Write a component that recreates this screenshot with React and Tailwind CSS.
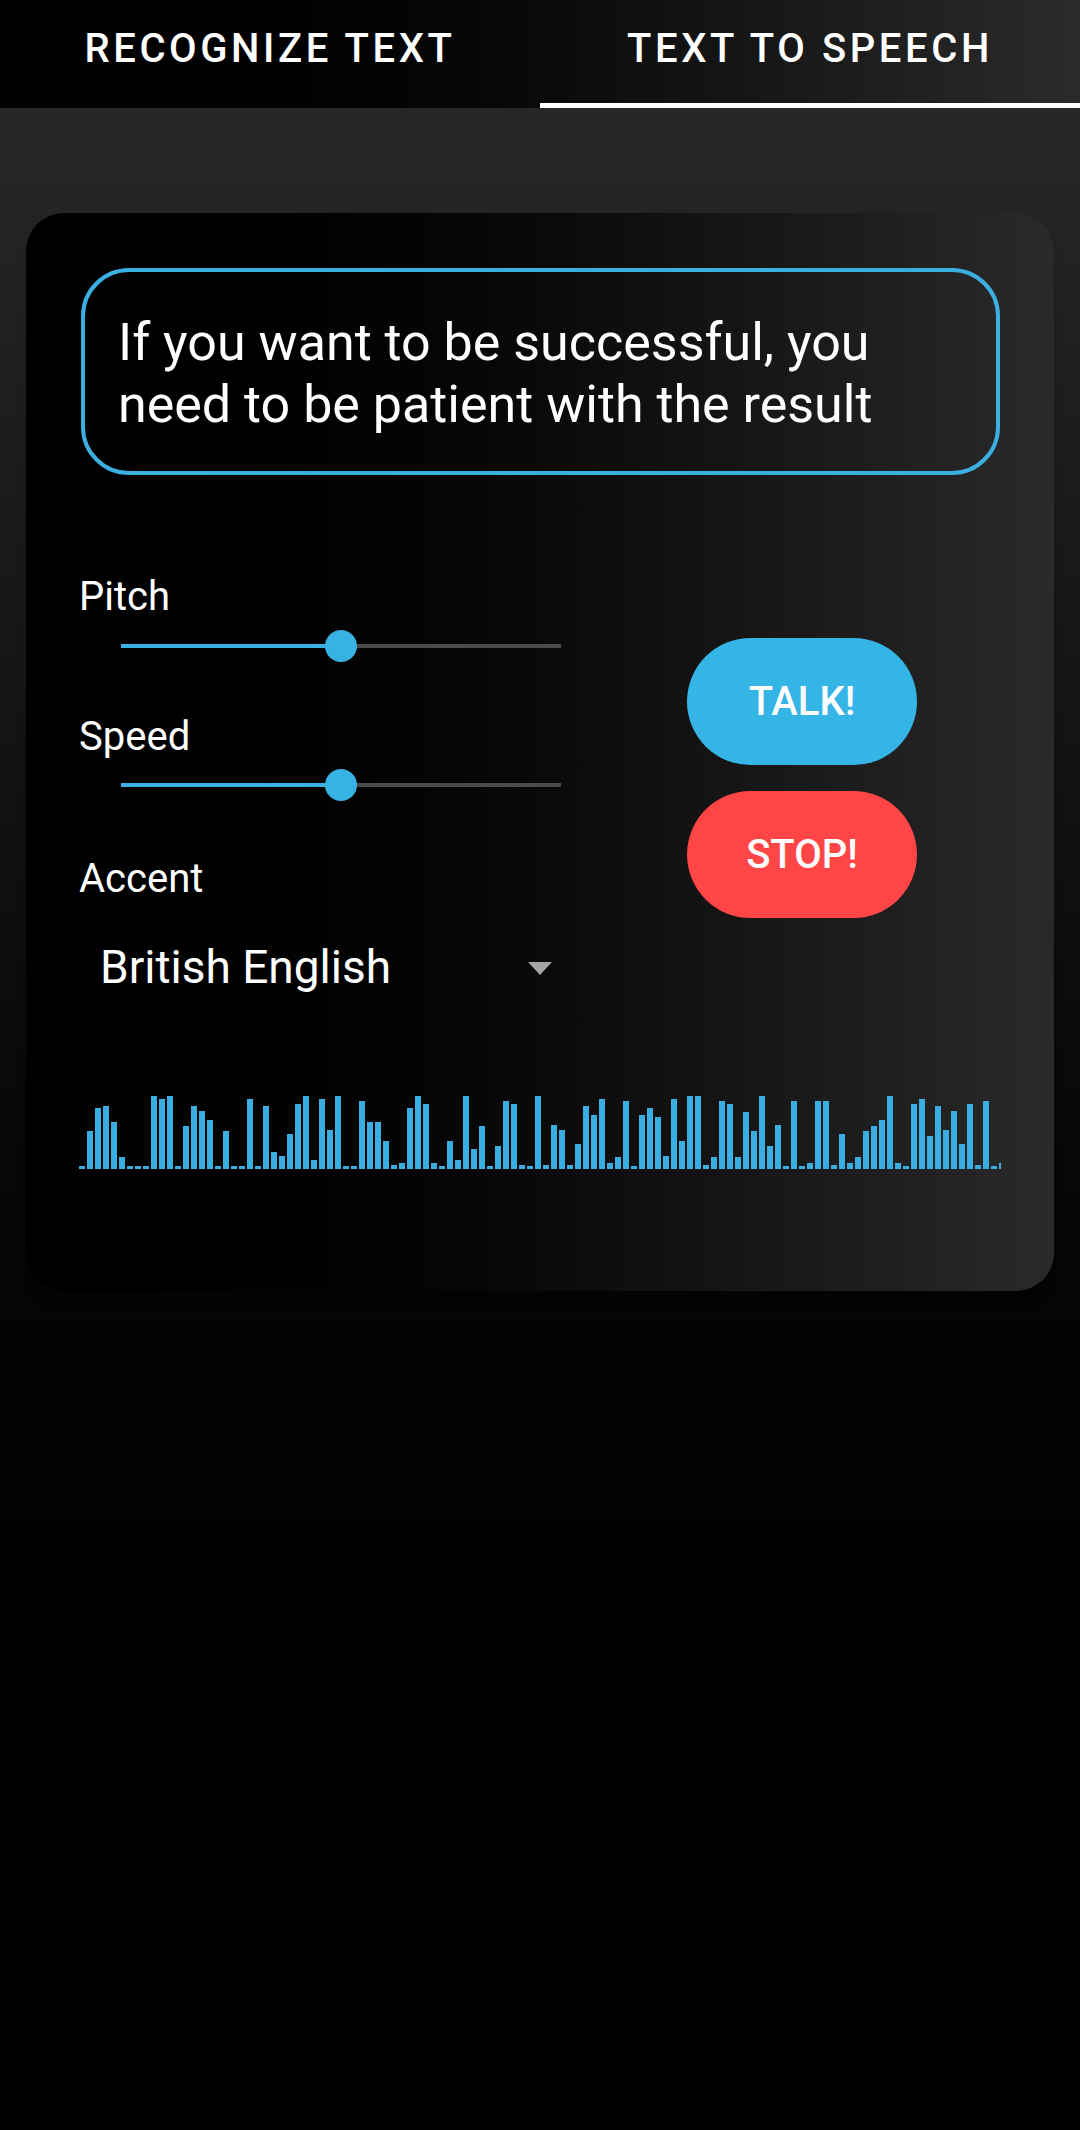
import React from 'react'

const bars = [
  3, 38, 61, 63, 47, 12, 3, 3, 3, 73,
  70, 73, 3, 43, 63, 58, 49, 3, 38, 3,
  3, 70, 3, 63, 17, 13, 35, 65, 73, 9,
  70, 39, 73, 3, 3, 68, 47, 47, 28, 4,
  6, 61, 73, 65, 6, 3, 28, 9, 73, 20,
  43, 3, 23, 68, 65, 4, 3, 73, 4, 44,
  39, 4, 25,
  63, 54, 70, 6, 12, 68, 3, 54, 61, 52,
  13, 70, 28, 73, 73, 4, 12, 68, 65, 12,
  57, 38, 73, 23, 44, 3, 68, 3, 6, 68,
  68, 4, 35, 6, 12, 38, 43, 49, 73, 6,
  3, 65, 70, 33, 63, 39, 58, 25, 65, 4,
  68, 3, 6
]

const Slider = ({ value }) => (
  <div className="relative ml-[40px] h-[32px] w-[440px]">
    <div className="absolute left-0 right-0 top-[14px] h-[4px] bg-[#4a4a4a]" />
    <div className="absolute left-0 top-[14px] h-[4px] bg-[#38b1e3]" style={{ width: `${value}%` }} />
    <div
      className="absolute top-0 h-[32px] w-[32px] -ml-[16px] rounded-full bg-[#38b1e3]"
      style={{ left: `${value}%` }}
    />
  </div>
)

const App = () => {
  return (
    <div className="min-h-[2130px] w-[1080px] bg-gradient-to-b from-[#2c2b2c] to-[#000000] font-['Roboto',sans-serif] text-white">
      <div className="flex h-[108px] bg-gradient-to-r from-[#000000] to-[#2b2b2b]">
        <div className="flex w-[540px] flex-col">
          <div className="flex h-[103px] items-center justify-center pb-[6px] text-[40px] font-medium tracking-[3.6px]">
            RECOGNIZE TEXT
          </div>
        </div>
        <div className="flex w-[540px] flex-col">
          <div className="flex h-[103px] items-center justify-center pb-[6px] text-[40px] font-medium tracking-[3.6px]">
            TEXT TO SPEECH
          </div>
          <div className="h-[5px] bg-white" />
        </div>
      </div>

      <div className="mx-[26px] mt-[105px] rounded-[38px] bg-gradient-to-r from-[#000000] to-[#2b2a2b] px-[55px] pb-[122px] pt-[55px] shadow-lg">
        <div className="h-[207px] w-[919px] rounded-[48px] border-4 border-[#3aafe0] pl-[33px] pr-[40px] pt-[40px] text-[52px] leading-[62px]">
          If you want to be successful, you need to be patient with the result
        </div>

        <div className="mt-[100px] flex">
          <div className="flex w-[480px] flex-col">
            <div className="-ml-[2px] text-[40px] leading-[44px]">Pitch</div>
            <div className="mt-[11px]">
              <Slider value={50} />
            </div>
            <div className="-ml-[2px] mt-[53px] text-[40px] leading-[44px]">Speed</div>
            <div className="mt-[10px]">
              <Slider value={50} />
            </div>
            <div className="-ml-[2px] mt-[56px] text-[40px] leading-[44px]">Accent</div>
            <div className="mt-[40px] flex items-center">
              <span className="ml-[19px] text-[46px] leading-[52px]">British English</span>
              <svg className="ml-auto mr-[9px] mt-[2px]" width="24" height="13" viewBox="0 0 24 13">
                <polygon points="0,0 24,0 12,13" fill="#a4a4a4" />
              </svg>
            </div>
          </div>

          <div className="ml-[126px] mt-[63px] flex flex-col gap-[26px]">
            <button className="flex h-[127px] w-[230px] items-center justify-center rounded-full bg-[#35b5e5] text-[40px] font-medium">
              TALK!
            </button>
            <button className="flex h-[127px] w-[230px] items-center justify-center rounded-full bg-[#ff4545] text-[40px] font-medium">
              STOP!
            </button>
          </div>
        </div>

        <div className="-ml-[2px] mt-[103px] flex h-[73px] w-[922px] items-end gap-[2px] overflow-hidden">
          {bars.map((h, i) => (
            <div key={i} className="w-[6px] shrink-0 bg-[#3aaee0]" style={{ height: `${h}px` }} />
          ))}
        </div>
      </div>
    </div>
  )
}

export default App
